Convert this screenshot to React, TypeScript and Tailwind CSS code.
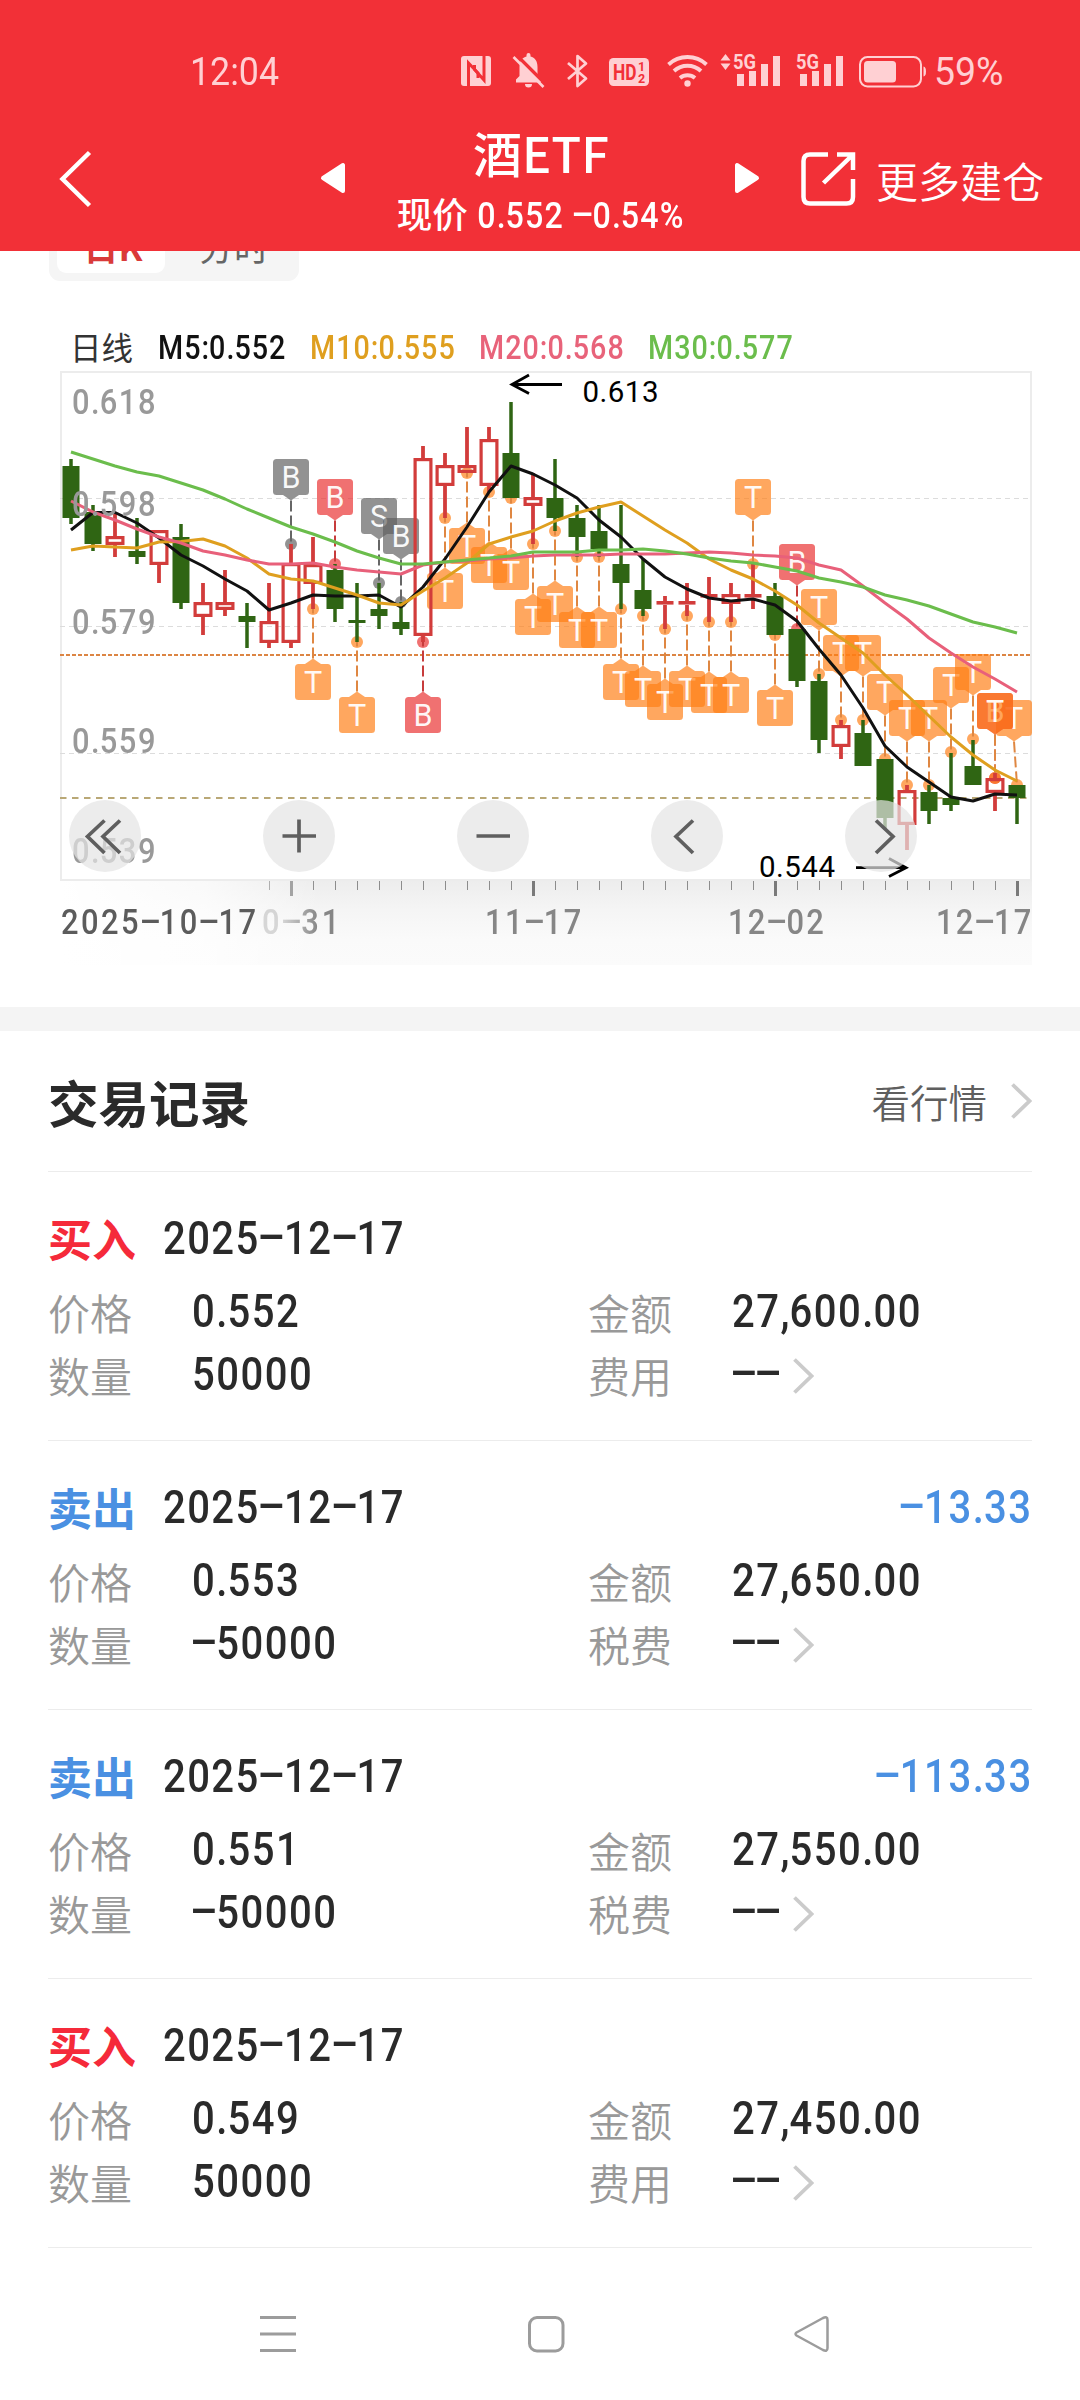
import React from "react";

const CJK = "font-['Noto_Sans_CJK_SC',sans-serif]";

/* Narrow DIN-style figures: Roboto, condensed, with wide dashes. */
function Din({ children, className = "tracking-[0.041em]" }: { children: string; className?: string }) {
  return (
    <span className={`inline-block whitespace-pre font-['Roboto',sans-serif] scale-x-[0.87] ${className}`}>
      {children.split(/([-.,:])/).map((part, i) => {
        if (part === "-")
          return (
            <span key={i} className="inline-block w-[0.605em] text-center tracking-normal">
              <span className="inline-block -translate-y-[0.055em] scale-x-[2.1]">-</span>
            </span>
          );
        if (part === "." || part === "," || part === ":")
          return (
            <span key={i} className="tracking-normal">
              {part}
            </span>
          );
        return part;
      })}
    </span>
  );
}

function StatusIcons() {
  const c = "#ffd0d3";
  const bars = [
    [0, 74],
    [12, 71],
    [24, 64],
    [36, 56],
  ];
  return (
    <svg width="470" height="40" viewBox="459 50 470 40" fill="none" className="shrink-0">
      <rect x="461" y="56" width="30" height="30" rx="3" fill={c} />
      <path d="M468.500 87V63L478 73V78" stroke="#f23037" strokeWidth="3" />
      <path d="M484 55V80L474.500 69.500V65" stroke="#f23037" strokeWidth="3" />
      <path
        d="M516 84.500V81.500L519.500 78V69C519.500 62.500 522.500 59.500 526.500 58.500V57A2 2 0 0 1 530.500 57V58.500C535 59.500 537.500 63 537.500 69V78L541 81.500V84.500Z"
        fill={c}
        transform="translate(0 -2)"
      />
      <path d="M525 84H532A3.500 3.500 0 0 1 525 84Z" fill={c} />
      <path d="M516.500 55L546 84.500" stroke="#f23037" strokeWidth="3.200" />
      <path d="M513.500 57L543.500 87" stroke={c} strokeWidth="2.600" />
      <path d="M568 63L586 78.500L577.500 86V56L586 63.500L568 79" stroke={c} strokeWidth="2.700" strokeLinejoin="round" />
      <rect x="609" y="58" width="40" height="28" rx="4.500" fill={c} />
      <text x="613" y="80" fontSize="22" fontWeight="700" textLength="23.500" lengthAdjust="spacingAndGlyphs" fill="#f23037" fontFamily="Roboto, sans-serif">HD</text>
      <text x="638" y="71" fontSize="12.500" fontWeight="700" fill="#f23037" fontFamily="Roboto, sans-serif">1</text>
      <text x="638" y="82.500" fontSize="12.500" fontWeight="700" fill="#f23037" fontFamily="Roboto, sans-serif">2</text>
      <g stroke={c} strokeWidth="3.900">
        <path d="M668.500 64.500A28 28 0 0 1 706.500 64.500" />
        <path d="M674 71A20 20 0 0 1 701 71" />
        <path d="M680 78A11.500 11.500 0 0 1 695 78" />
      </g>
      <circle cx="687.500" cy="83.500" r="3.200" fill={c} />
      <path d="M720.500 60.500L725.500 54L730.500 60.500ZM720.500 63.500L725.500 70L730.500 63.500Z" fill={c} />
      {[0, 63].map((dx) => (
        <g key={dx} fill={c} transform={`translate(${dx} 0)`}>
          <text x="733" y="69" fontSize="20.500" fontWeight="700" textLength="23" lengthAdjust="spacingAndGlyphs" fontFamily="Roboto, sans-serif">5G</text>
          {bars.map(([x, y]) => (
            <rect key={x} x={737 + x} y={y} width="7" height={86 - y} />
          ))}
        </g>
      ))}
      <rect x="860" y="57" width="61" height="29.500" rx="7.500" stroke={c} strokeWidth="2" />
      <rect x="864" y="61" width="32" height="21.500" rx="3.500" fill={c} />
      <path d="M923.500 66.500Q926 67 926 71.500T923.500 76.500Z" fill={c} />
    </svg>
  );
}

function Header() {
  return (
    <header className="relative z-10 flex h-[251px] w-full shrink-0 flex-col bg-[#f23037] text-white">
      <div className="mt-[50px] flex h-10 items-center pl-[189px] font-['Roboto',sans-serif] text-[38px] text-[#ffd0d3]">
        <span className="w-[270px] origin-left translate-y-[2px] leading-10">
          <span className="ml-[1px] inline-block origin-left scale-x-[0.94]">12:04</span>
        </span>
        <StatusIcons />
        <span className="ml-[5px] inline-block origin-left translate-y-[2px] scale-x-[0.985] leading-10">59%</span>
      </div>
      <div className="mt-[35px] flex h-[126px] items-start">
        <svg width="50" height="60" viewBox="50 150 50 60" className="ml-[50px] mt-[25px]" fill="none" stroke="white" strokeWidth="4.500">
          <path d="M89.500 152.500L62.500 179L89.500 205.500" />
        </svg>
        <svg width="28" height="34" viewBox="319 161 28 34" className="ml-[219px] mt-9" fill="white" stroke="white" strokeWidth="4" strokeLinejoin="round">
          <path d="M343 165V191L323 178Z" />
        </svg>
        <div className="flex w-[386px] flex-col items-center">
          <div className={`${CJK} ml-[2px] text-[49px] font-medium leading-[54px]`}>酒ETF</div>
          <div className="ml-[9px] mt-[14px] flex items-baseline gap-1 leading-[40px]">
            <span className={`${CJK} text-[35.5px] font-medium`}>现价</span>
            <Din className="-mr-[24px] origin-left pl-[6px] text-[37px] font-medium tracking-[0.035em]">0.552 -0.54%</Din>
          </div>
        </div>
        <svg width="28" height="34" viewBox="733 161 28 34" className="mt-9" fill="white" stroke="white" strokeWidth="4" strokeLinejoin="round">
          <path d="M737 165V191L757 178Z" />
        </svg>
        <svg width="60" height="60" viewBox="798 149 60 60" className="ml-[37px] mt-6" fill="none" stroke="white" strokeWidth="4.500">
          <path d="M828 154.500H810Q803.500 154.500 803.500 161V197Q803.500 203.500 810 203.500H846.500Q853 203.500 853 197V179" />
          <path d="M837 154.500H853V170M853 154.500L823.500 183" />
        </svg>
        <span className={`${CJK} ml-[18px] mt-[34px] text-[42px] font-[350] leading-[42px]`}>更多建仓</span>
      </div>
    </header>
  );
}

type Candle = [kind: "g" | "r", high: number, low: number, top: number, bottom: number];
const CANDLES: Candle[] = [
  ["g", 459, 524, 466, 518], ["g", 505, 551, 512, 544], ["r", 512, 557, 536, 545],
  ["g", 518, 564, 551, 557], ["r", 530, 583, 530, 565], ["g", 524, 609, 537, 603],
  ["r", 583, 635, 602, 617], ["r", 570, 616, 602, 610], ["g", 603, 648, 616, 622],
  ["r", 583, 648, 621, 643], ["r", 544, 648, 563, 643], ["r", 537, 609, 564, 584],
  ["g", 564, 622, 570, 609], ["g", 583, 642, 620, 623], ["g", 583, 629, 609, 616],
  ["g", 602, 635, 622, 629], ["r", 446, 642, 458, 636], ["r", 453, 518, 465, 486],
  ["r", 427, 473, 465, 473], ["r", 427, 492, 439, 486], ["g", 402, 498, 453, 498],
  ["r", 473, 544, 497, 506], ["g", 459, 531, 498, 518], ["g", 505, 557, 518, 537],
  ["g", 505, 557, 531, 549], ["g", 505, 609, 564, 583], ["g", 559, 616, 590, 609],
  ["r", 596, 629, 601, 605], ["r", 583, 616, 601, 605], ["r", 577, 622, 594, 598],
  ["r", 583, 622, 594, 604], ["r", 564, 609, 594, 598], ["g", 583, 635, 596, 635],
  ["g", 629, 687, 629, 681], ["g", 674, 753, 681, 740], ["r", 720, 759, 725, 747],
  ["g", 720, 766, 733, 766], ["g", 759, 830, 759, 818], ["r", 785, 850, 790, 825],
  ["g", 785, 824, 792, 811], ["g", 753, 811, 798, 805], ["g", 740, 785, 766, 785],
  ["r", 773, 811, 778, 793], ["g", 785, 824, 785, 798],
];

const AVERAGES: { color: string; values: number[] }[] = [
  { color: "#111111", values: [530, 512.5, 512.5, 523, 538, 555, 566, 579, 591, 610, 603, 595, 596, 596, 595, 607, 587, 559, 527, 492, 466, 474, 485, 498, 520, 537, 559, 577, 589, 598, 601, 599, 605, 621, 649, 675, 708, 746, 767, 782, 797, 801, 794, 795] },
  { color: "#df9f1f", values: [550, 546, 547, 548, 542, 541.5, 539, 546, 558, 574, 579, 581, 588, 595, 603, 605, 591, 578, 563, 544, 537, 531, 521, 513, 507, 502, 516, 530, 543, 559, 570, 579, 591, 605, 623, 638, 653, 675, 695, 716, 737, 755, 770, 781] },
  { color: "#e8607a", values: [501, 512, 520, 529, 537, 543, 551, 555, 560, 564, 564, 563, 567, 570, 572, 574, 565, 562, 561, 559, 558, 556, 555, 555, 555, 554, 554, 554, 553, 552, 553, 555, 556, 558, 565, 570, 586, 603, 619, 638, 653, 667, 679, 692] },
  { color: "#6bbd4c", values: [452, 459, 466, 472, 476, 483, 490, 499, 509, 518, 527, 534, 542, 551, 558, 564, 564, 562, 560, 558, 556, 552, 552, 552, 550, 550, 549, 551, 554, 558, 561, 563, 567, 571, 578, 582, 587, 595, 600, 606, 614, 622, 627, 633] },
];

const TONES = {
  o: { fill: "#ff7e13", line: "#df8742" },
  r: { fill: "#e92e2e", line: "#c73c3c" },
  k: { fill: "#5f5f5f", line: "#666666" },
};

type Marker = [index: number, letter: string, tone: keyof typeof TONES, boxTop: number, dot: number];
const MARKERS: Marker[] = [
  [10, "B", "k", 459, 544], [11, "T", "o", 664, 609], [12, "B", "r", 479, 564],
  [13, "T", "o", 697, 642], [14, "S", "k", 498, 583], [15, "B", "k", 518, 602],
  [16, "B", "r", 697, 642], [17, "T", "o", 573, 518], [18, "T", "o", 528, 473],
  [19, "T", "o", 547, 492], [20, "T", "o", 554, 498], [21, "T", "o", 599, 544],
  [22, "T", "o", 586, 531], [23, "T", "o", 612, 557], [24, "T", "o", 612, 557],
  [25, "T", "o", 664, 609], [26, "T", "o", 671, 616], [27, "T", "o", 684, 629],
  [28, "T", "o", 671, 616], [29, "T", "o", 677, 622], [30, "T", "o", 677, 622],
  [31, "T", "o", 479, 564], [32, "T", "o", 690, 635], [33, "B", "r", 544, 629],
  [34, "T", "o", 589, 674], [35, "T", "o", 635, 720], [36, "T", "o", 635, 720],
  [37, "T", "o", 674, 759], [38, "T", "o", 700, 785], [39, "T", "o", 700, 785],
  [40, "T", "o", 667, 752], [41, "T", "o", 654, 739], [43, "T", "o", 700, 785],
  [42, "B", "r", 693, 778], [42, "T", "o", 693, 778],
];

const xAt = (i: number) => 71 + 22 * i;

function MarkerTag({ marker }: { marker: Marker }) {
  const [i, letter, tone, top, dot] = marker;
  const x = xAt(i);
  const bx = Math.min(x, 1014);
  const above = top < dot;
  const tip = above ? top + 41.5 : top - 5.5;
  const base = above ? top + 36 : top;
  const { fill, line } = TONES[tone];
  return (
    <g>
      <circle cx={x} cy={dot} r="6" fill={fill} fillOpacity="0.68" />
      <path d={`M${bx} ${tip}L${x} ${dot}`} stroke={line} strokeWidth="2" strokeDasharray="11 4" />
      <g fill={fill} fillOpacity="0.68">
        <rect x={bx - 18} y={top} width="36" height="36" rx="3.500" />
        <path d={`M${bx - 8} ${base}L${bx} ${tip}L${bx + 8} ${base}Z`} />
      </g>
      <text x={bx} y={top + 29} textAnchor="middle" fontSize="30.500" fill="#fff" fillOpacity="0.95" fontFamily="Roboto, sans-serif">
        {letter}
      </text>
    </g>
  );
}

function CandleBar({ candle, index }: { candle: Candle; index: number }) {
  const [kind, high, low, top, bottom] = candle;
  const x = xAt(index);
  if (kind === "g")
    return (
      <g fill="#2f6513">
        <rect x={x - 1.75} y={high} width="3.500" height={low - high} />
        <rect x={x - 8.5} y={top} width="17" height={bottom - top} />
      </g>
    );
  const h = bottom - top;
  return (
    <g>
      <g fill="#d23c3b">
        <rect x={x - 1.9} y={high} width="3.800" height={Math.max(0, top - high)} />
        <rect x={x - 1.9} y={bottom} width="3.800" height={low - bottom} />
      </g>
      {h > 4 ? (
        <rect x={x - 7.9} y={top + 1.6} width="15.800" height={h - 3.2} fill="none" stroke="#d23c3b" strokeWidth="3.200" />
      ) : (
        <rect x={x - 8.5} y={top} width="17" height="3.600" fill="#d23c3b" />
      )}
    </g>
  );
}

function ChartCanvas() {
  return (
    <svg width="1080" height="600" viewBox="0 366 1080 600" fill="none" className="block">
      <defs>
        <linearGradient id="axisDown" x1="0" y1="0" x2="0" y2="1">
          <stop offset="0" stopColor="#ededed" />
          <stop offset="0.350" stopColor="#f5f5f5" />
          <stop offset="0.700" stopColor="#fafafa" />
          <stop offset="1" stopColor="#fbfbfb" />
        </linearGradient>
        <linearGradient id="axisFade" x1="0" y1="0" x2="1" y2="0">
          <stop offset="0" stopColor="#fff" />
          <stop offset="0.550" stopColor="#fff" stopOpacity="0.700" />
          <stop offset="1" stopColor="#fff" stopOpacity="0" />
        </linearGradient>
      </defs>
      <rect x="61" y="881" width="971" height="84" fill="url(#axisDown)" />
      {CANDLES.map((_, i) =>
        i < 9 || i % 11 === 10 ? null : <rect key={i} x={xAt(i)} y="881" width="1" height="9" fill="#8c8c8c" />,
      )}
      <rect x="61" y="881" width="260" height="84" fill="url(#axisFade)" />
      {[10, 21, 32, 43].map((i) => (
        <rect key={i} x={xAt(i) - 1} y="881" width="3" height="15" fill={i === 10 ? "#a3a3a3" : "#7a7a7a"} />
      ))}
      <path d="M61 372H1031V880H61Z" stroke="#ececec" strokeWidth="2" />
      {[498.5, 626.5, 753.5].map((y) => (
        <path key={y} d={`M60 ${y}H1032`} stroke="#dcdcdc" strokeWidth="1" strokeDasharray="5 4" />
      ))}
      <path d="M60 655H1032" stroke="#dc8544" strokeWidth="2" strokeDasharray="4 2" />
      <path d="M60 798H1032" stroke="#b9a876" strokeWidth="2" strokeDasharray="6.500 5.500" />
      {MARKERS.map((m, i) => (
        <MarkerTag key={i} marker={m} />
      ))}
      {CANDLES.map((c, i) => (
        <CandleBar key={i} candle={c} index={i} />
      ))}
      {AVERAGES.map((a) => (
        <polyline key={a.color} points={a.values.map((y, i) => `${xAt(i)},${y}`).join(" ")} stroke={a.color} strokeWidth="3" strokeLinejoin="round" />
      ))}
      <g stroke="#000" strokeWidth="2.800">
        <path d="M562 384.500H512M529 375L512 384.500L529 393.500" />
        <path d="M856 867.700H906M889 858.500L906 867.700L889 876.500" />
      </g>
      <g fill="#000" fontFamily="Roboto, sans-serif" fontSize="29.500">
        <text x="582.500" y="401.500" textLength="76">0.613</text>
        <text x="759" y="876.700" textLength="76">0.544</text>
      </g>
    </svg>
  );
}

const CONTROLS = ["M35.500 20.500L18.500 36.500L35.500 53M51 20.500L34 36.500L51 53", "M19.500 36H53M36 19.500V52.500", "M19.500 36H53", "M42 20.500L25 36.500L42 53", "M31 20.500L48 36.500L31 53"];

function Chart() {
  return (
    <div className="relative mt-[3px] h-[600px] w-[1080px]">
      <ChartCanvas />
      {[
        ["0.618", "top-[15px]"],
        ["0.598", "top-[117px]"],
        ["0.579", "top-[235px]"],
        ["0.559", "top-[354px]"],
        ["0.539", "top-[464px]"],
      ].map(([label, pos]) => (
        <Din key={label} className={`absolute left-[72px] origin-left text-[35.5px] font-medium leading-[42px] tracking-[0.05em] text-[#999] ${pos}`}>
          {label}
        </Din>
      ))}
      <div className="absolute left-[69px] top-[434px] flex w-[848px] justify-between">
        {CONTROLS.map((d) => (
          <button key={d} className="size-[72px] rounded-full bg-[#e4e4e4]/70">
            <svg width="72" height="72" viewBox="0 0 72 72" fill="none" stroke="#5f5f5f" strokeWidth="3.700">
              <path d={d} />
            </svg>
          </button>
        ))}
      </div>
      <div className="absolute left-0 top-[535px] w-full text-[35.5px] font-medium leading-[42px] text-[#868686]">
        <Din className="absolute left-[61px] origin-left tracking-[0.08em] text-[#5c5c5c]">2025-10-17</Din>
        <Din className="absolute left-[262px] origin-left tracking-[0.095em] [mask-image:linear-gradient(90deg,rgba(0,0,0,0.3)_25%,black_70%)]">0-31</Din>
        <Din className="absolute left-[485px] origin-left tracking-[0.08em]">11-17</Din>
        <Din className="absolute left-[728px] origin-left tracking-[0.075em]">12-02</Din>
        <Din className="absolute left-[936px] origin-left tracking-[0.07em]">12-17</Din>
      </div>
    </div>
  );
}

function Chevron() {
  return (
    <svg width="22" height="38" viewBox="0 0 22 38" fill="none" stroke="#cbcbcb" strokeWidth="3.800" className="shrink-0">
      <path d="M2.500 2.500L19.500 19L2.500 35.500" />
    </svg>
  );
}

type Trade = { side: "buy" | "sell"; price: string; amount: string; quantity: string; profit?: string };
const TRADES: Trade[] = [
  { side: "buy", price: "0.552", amount: "27,600.00", quantity: "50000" },
  { side: "sell", price: "0.553", amount: "27,650.00", quantity: "-50000", profit: "-13.33" },
  { side: "sell", price: "0.551", amount: "27,550.00", quantity: "-50000", profit: "-113.33" },
  { side: "buy", price: "0.549", amount: "27,450.00", quantity: "50000" },
];

function Field({ label, value, chevron }: { label: string; value: string; chevron?: boolean }) {
  return (
    <div className="flex h-12 items-start">
      <span className={`${CJK} w-[144px] translate-y-px text-[42px] font-[350] leading-[48px] text-[#999]`}>{label}</span>
      <Din className="origin-left text-[46px] font-medium leading-[48px] tracking-[0.038em] text-[#2a2a2a]">{value}</Din>
      {chevron && (
        <span className="ml-[4px] mt-[7px]">
          <Chevron />
        </span>
      )}
    </div>
  );
}

function TradeRow({ trade }: { trade: Trade }) {
  const sell = trade.side === "sell";
  return (
    <article className="mx-12 h-[269px] border-b border-[#ececec] pt-[42px]">
      <div className="flex h-12 items-start leading-[48px]">
        <span className={`${CJK} w-[115px] text-[44px] font-bold ${sell ? "text-[#4a90e2]" : "text-[#f52a3a]"}`}>
          {sell ? "卖出" : "买入"}
        </span>
        <Din className="origin-left text-[46px] font-medium tracking-[0.036em] text-[#2a2a2a]">2025-12-17</Din>
        {trade.profit && (
          <Din className="-mr-px ml-auto origin-right text-[46px] font-medium tracking-[0.041em] text-[#4a90e2]">{trade.profit}</Din>
        )}
      </div>
      <div className="mt-[25px] grid grid-cols-[540px_1fr] gap-y-[15px]">
        <Field label="价格" value={trade.price} />
        <Field label="金额" value={trade.amount} />
        <Field label="数量" value={trade.quantity} />
        <Field label={sell ? "税费" : "费用"} value="--" chevron />
      </div>
    </article>
  );
}

export default function App() {
  return (
    <div className={`${CJK} flex h-[2400px] w-[1080px] flex-col overflow-hidden bg-white`}>
      <Header />
      <div className="-mt-11 ml-[49px] flex h-[74px] w-[250px] shrink-0 items-stretch rounded-[11px] bg-[#f5f5f5] p-2 text-[35px] leading-[62px]">
        <div className="w-[108px] shrink-0 rounded-[9px] bg-white pl-[4px] text-center font-bold text-[#d93a3a]">日K</div>
        <div className="w-[126px] shrink-0 pl-[12px] text-center text-[#666]">分时</div>
      </div>
      <div className="mt-[48px] flex h-[34px] items-center pl-[70px] text-[33px] font-medium leading-[34px]">
        <span className="w-[88px] text-[31.5px] font-normal text-[#333]">日线</span>
        <span className="w-[152px] text-[#111]"><Din className="origin-left tracking-[0.036em]">M5:0.552</Din></span>
        <span className="w-[169px] text-[#df9f1f]"><Din className="origin-left tracking-[0.036em]">M10:0.555</Din></span>
        <span className="w-[169px] text-[#e8637a]"><Din className="origin-left tracking-[0.036em]">M20:0.568</Din></span>
        <span className="text-[#6bbd4c]"><Din className="origin-left tracking-[0.036em]">M30:0.577</Din></span>
      </div>
      <Chart />
      <div className="mt-[41px] h-6 shrink-0 bg-[#f4f4f4]" />
      <div className="mx-12 flex h-[141px] shrink-0 items-center border-b border-[#ececec] pb-px">
        <h2 className="text-[50.5px] font-bold leading-[60px] text-[#2a2a2a]">交易记录</h2>
        <span className="ml-auto mr-[23px] text-[38.5px] font-[350] leading-[60px] text-[#5f5f5f]">看行情</span>
        <Chevron />
      </div>
      {TRADES.map((t, i) => (
        <TradeRow key={i} trade={t} />
      ))}
      <nav className="flex flex-1 items-start pt-[64px]">
        <svg width="1080" height="44" viewBox="0 2312 1080 44" fill="none" stroke="#9c9c9c" strokeWidth="3" strokeLinejoin="round">
          <path d="M260 2317.500H296M260 2334H296M260 2350.500H296" />
          <rect x="529.500" y="2317.500" width="33.500" height="33.500" rx="7.500" />
          <path d="M796.500 2332.500L823 2318Q827.500 2316 827.500 2320V2348Q827.500 2352 823 2350L796.500 2335.500Q794.500 2334 796.500 2332.500Z" strokeWidth="2.500" />
        </svg>
      </nav>
    </div>
  );
}
